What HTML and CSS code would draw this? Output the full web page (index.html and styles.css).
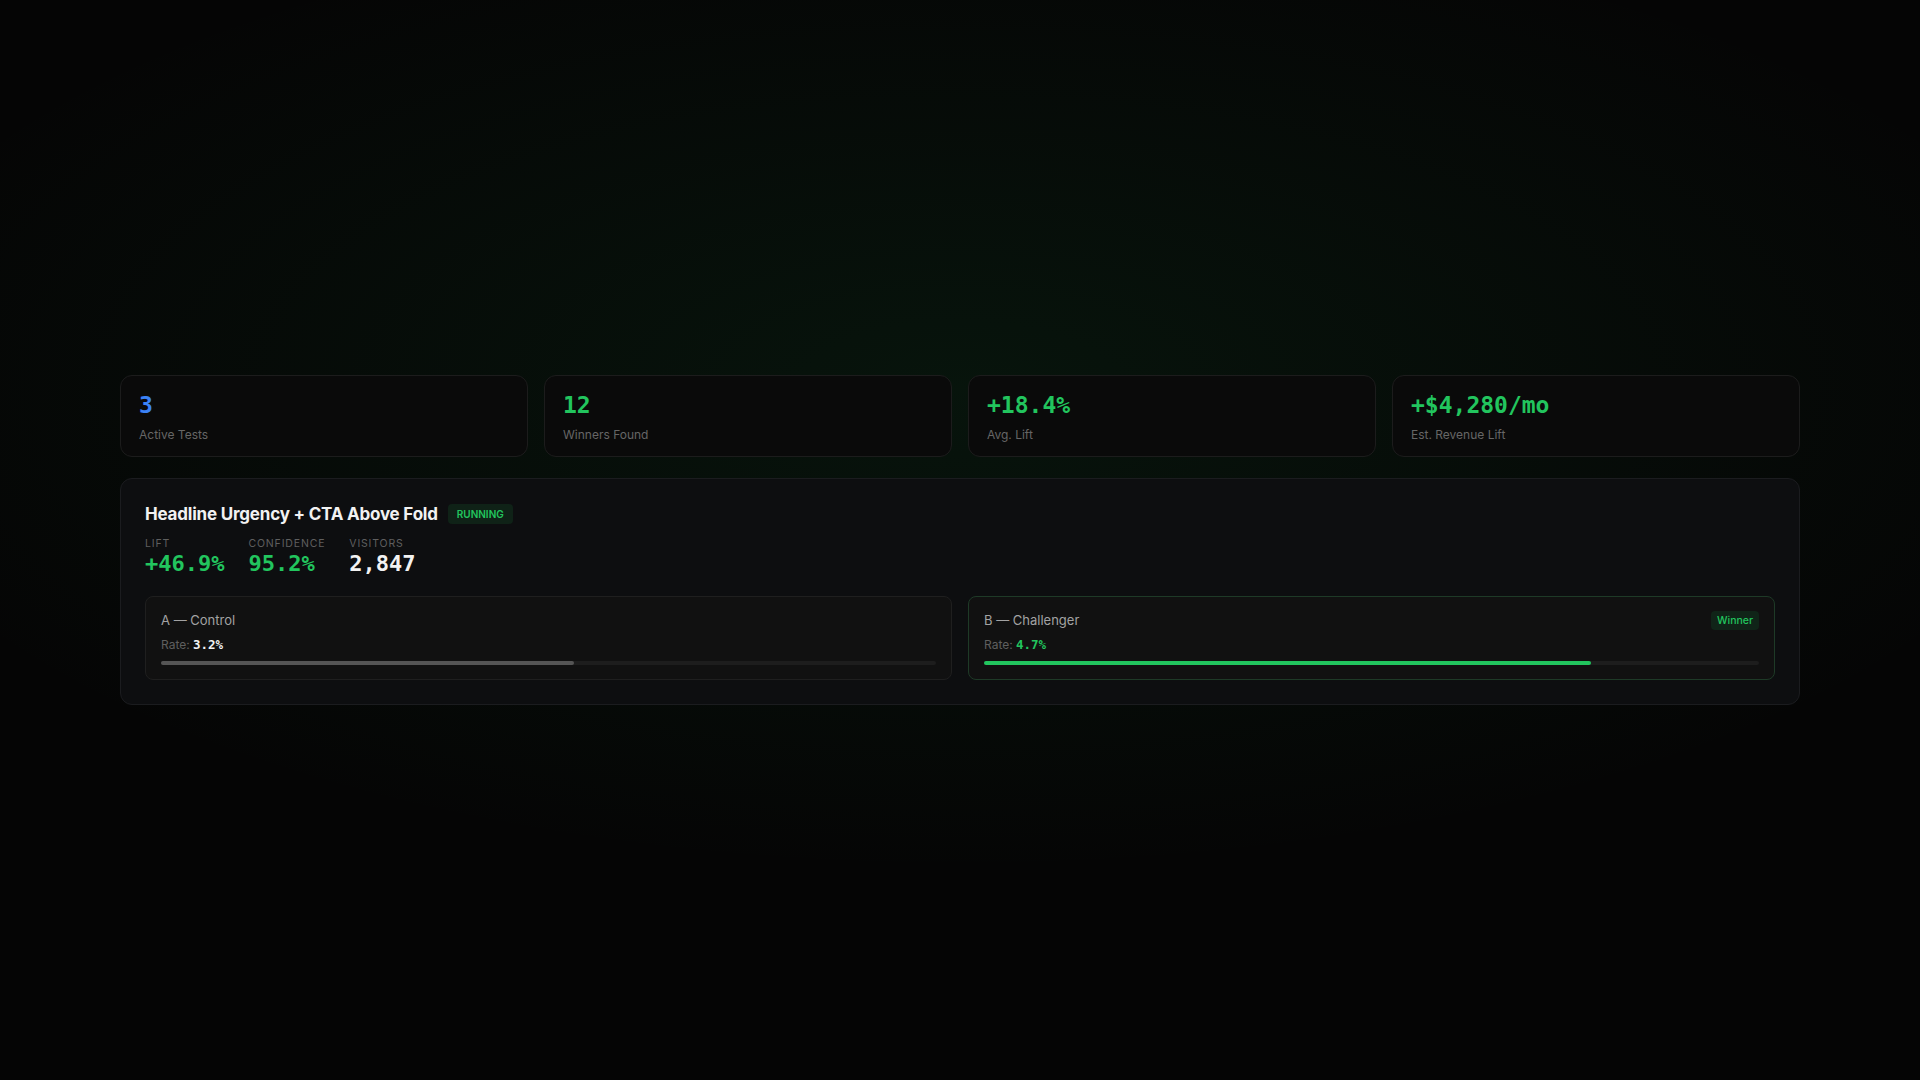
FILE: index.html
```html
<!DOCTYPE html>
<html lang="en">
<head>
  <meta charset="UTF-8">
  <meta name="viewport" content="width=device-width, initial-scale=1.0">
  <title>A/B Tests</title>
  <link rel="stylesheet" href="styles.css">
</head>
<body>

  <div class="wrap">

    <!-- summary stats -->
    <div class="stats">
      <div class="stat">
        <div class="stat-value blue">3</div>
        <div class="stat-label">Active Tests</div>
      </div>
      <div class="stat">
        <div class="stat-value green">12</div>
        <div class="stat-label">Winners Found</div>
      </div>
      <div class="stat">
        <div class="stat-value green">+18.4%</div>
        <div class="stat-label">Avg. Lift</div>
      </div>
      <div class="stat">
        <div class="stat-value green">+$4,280/mo</div>
        <div class="stat-label">Est. Revenue Lift</div>
      </div>
    </div>

    <!-- test card -->
    <div class="test">
      <div class="test-head">
        <h2>Headline Urgency + CTA Above Fold</h2>
        <span class="badge">RUNNING</span>
      </div>

      <div class="metrics">
        <div class="metric">
          <div class="metric-label">Lift</div>
          <div class="metric-value green">+46.9%</div>
        </div>
        <div class="metric">
          <div class="metric-label">Confidence</div>
          <div class="metric-value green">95.2%</div>
        </div>
        <div class="metric">
          <div class="metric-label">Visitors</div>
          <div class="metric-value">2,847</div>
        </div>
      </div>

      <div class="variants">
        <div class="variant">
          <div class="variant-top">
            <span class="variant-name">A — Control</span>
          </div>
          <div class="rate">Rate: <b>3.2%</b></div>
          <div class="bar"><div class="fill" style="width:53.3%"></div></div>
        </div>
        <div class="variant win">
          <div class="variant-top">
            <span class="variant-name">B — Challenger</span>
            <span class="winner">Winner</span>
          </div>
          <div class="rate">Rate: <b>4.7%</b></div>
          <div class="bar"><div class="fill" style="width:78.3%"></div></div>
        </div>
      </div>
    </div>

  </div>

</body>
</html>
```

FILE: styles.css
```css
* {
  box-sizing: border-box;
}

body {
  margin: 0;
  min-height: 100vh;
  display: flex;
  align-items: center;
  justify-content: center;
  font-family: Inter, "Noto Sans", sans-serif;
  color: #e5e5e5;
  background-color: #050505;
  background-image: radial-gradient(ellipse 60% 45% at 50% 36%, rgba(34,197,94,0.08), rgba(34,197,94,0) 100%);
}

.wrap {
  width: 1680px;
}

/* stats row */
.stats {
  display: grid;
  grid-template-columns: repeat(4, 1fr);
  gap: 16px;
  margin-bottom: 21px;
}

.stat {
  background-color: #0a0a0a;
  border: 1px solid #1c1c1c;
  border-radius: 12px;
  padding: 15px 18px 13px;
  height: 82px;
}

.stat-value {
  font-family: "DejaVu Sans Mono", monospace;
  font-weight: bold;
  font-size: 23px;
  line-height: 28px;
}

.stat-label {
  margin-top: 8px;
  font-size: 12px;
  color: #666666;
}

/* test card */
.test {
  background-color: #0d0e10;
  border: 1px solid #1b1c1f;
  border-radius: 12px;
  padding: 24px 24px 24px;
}

.test-head {
  display: flex;
  align-items: center;
  gap: 10px;
}

.test-head h2 {
  margin: 0;
  font-size: 17px;
  font-weight: 700;
  letter-spacing: -0.2px;
  color: #f2f2f2;
  line-height: 22px;
}

.badge {
  font-size: 10px;
  font-weight: 600;
  color: #22c55e;
  background-color: #0f2217;
  padding: 4px 9px;
  border-radius: 4px;
}

.metrics {
  display: flex;
  gap: 24px;
  margin-top: 12px;
}

.metric-label {
  font-size: 10.5px;
  text-transform: uppercase;
  letter-spacing: 0.08em;
  color: #5f5f5f;
  line-height: 14px;
}

.metric-value {
  font-family: "DejaVu Sans Mono", monospace;
  font-weight: bold;
  font-size: 22px;
  line-height: 26px;
  color: #f2f2f2;
}

.variants {
  display: grid;
  grid-template-columns: 1fr 1fr;
  gap: 16px;
  margin-top: 19px;
}

.variant {
  background-color: #111111;
  border: 1px solid #1f1f1f;
  border-radius: 8px;
  padding: 14px 15px 14px;
}

.variant.win {
  border-color: #1e3a27;
}

.variant-top {
  display: flex;
  justify-content: space-between;
  align-items: center;
  height: 18px;
}

.variant-name {
  font-size: 13px;
  color: #a3a3a3;
}

.winner {
  font-size: 10.5px;
  font-weight: 500;
  color: #22c55e;
  background-color: #102418;
  padding: 3px 6px;
  border-radius: 4px;
}

.rate {
  margin-top: 8px;
  font-size: 12px;
  color: #5f5f5f;
  line-height: 16px;
}

.rate b {
  font-family: "DejaVu Sans Mono", monospace;
  font-size: 12.5px;
  color: #f2f2f2;
}

.win .rate b {
  color: #22c55e;
}

.bar {
  margin-top: 8px;
  height: 4px;
  background-color: #1d1d1d;
  border-radius: 2px;
}

.fill {
  height: 100%;
  background-color: #555555;
  border-radius: 2px;
}

.win .fill {
  background-color: #22c55e;
}

.green { color: #22c55e; }
.blue { color: #3b82f6; }
```
